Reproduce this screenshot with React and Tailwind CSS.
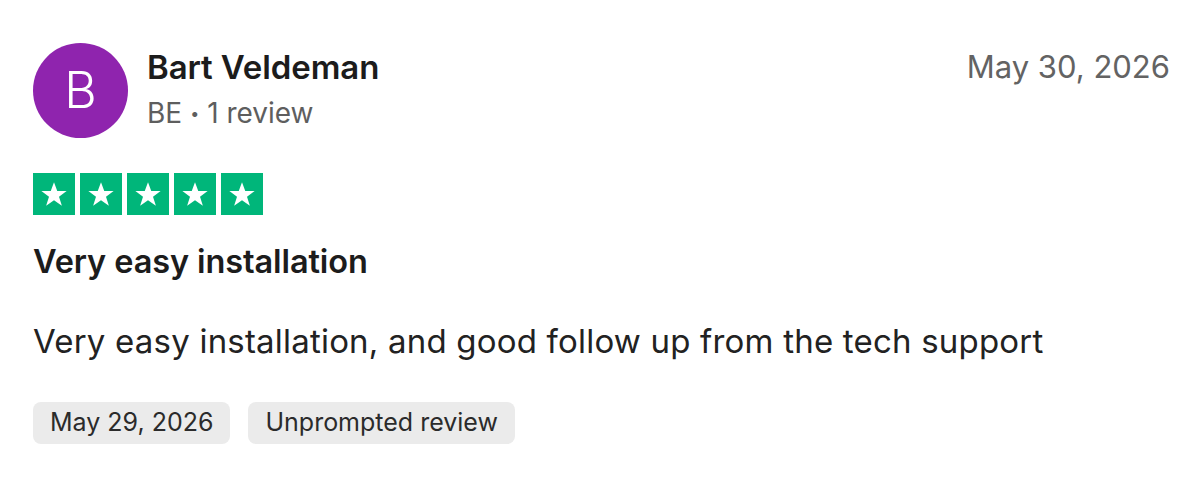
import { useState } from 'react';

function Star() {
    return (
        <svg viewBox="0 0 24 24" className="w-[30px] h-[30px]">
            <path
                d="M12 2.5l2.6 7.1h7.5l-6.1 4.5 2.3 7.3L12 16.9l-6.3 4.5 2.3-7.3-6.1-4.5h7.5z"
                fill="#fff"
            />
        </svg>
    );
}

export default function App() {
    const [rating] = useState(5);

    return (
        <div
            className="w-[1200px] h-[488px] bg-white text-[#1c1c1c] px-[33px] pt-[43px]"
            style={{ fontFamily: 'Inter, "Noto Sans", sans-serif' }}
        >
            {/* header */}
            <div className="flex items-start justify-between">
                <div className="flex items-center gap-[19px]">
                    <div className="w-[95px] h-[95px] rounded-full bg-[#8f24ae] flex items-center justify-center text-white text-[50px] font-light">
                        B
                    </div>
                    <div className="flex flex-col gap-[8px] -mt-[3px]">
                        <span className="text-[33px] font-semibold leading-[40px] tracking-[-0.1px]">Bart Veldeman</span>
                        <span className="text-[28px] text-[#5e5e5e] leading-[36px] flex items-center">
                            BE<span className="mx-[8px] text-[16px]">•</span>1 review
                        </span>
                    </div>
                </div>
                <span className="text-[31px] text-[#636363] leading-[40px] mt-[4px] mr-[-3px]">May 30, 2026</span>
            </div>

            {/* stars */}
            <div className="flex gap-[5px] mt-[35px]">
                {Array.from({ length: rating }).map((_, i) => (
                    <div key={i} className="w-[42px] h-[42px] bg-[#00b67a] flex items-center justify-center">
                        <Star />
                    </div>
                ))}
            </div>

            <h2 className="text-[32.5px] font-semibold leading-[40px] mt-[27px] tracking-[-0.1px]">Very easy installation</h2>

            <p className="text-[33px] leading-[40px] mt-[39px] tracking-[0.2px] text-[#222]">
                Very easy installation, and good follow up from the tech support
            </p>

            <div className="flex gap-[18px] mt-[41px]">
                <span className="h-[42px] px-[17px] rounded-[8px] bg-[#ebebeb] flex items-center text-[25px] text-[#2b2b2b]">
                    May 29, 2026
                </span>
                <span className="h-[42px] px-[17px] rounded-[8px] bg-[#ebebeb] flex items-center text-[25px] text-[#2b2b2b]">
                    Unprompted review
                </span>
            </div>
        </div>
    );
}
